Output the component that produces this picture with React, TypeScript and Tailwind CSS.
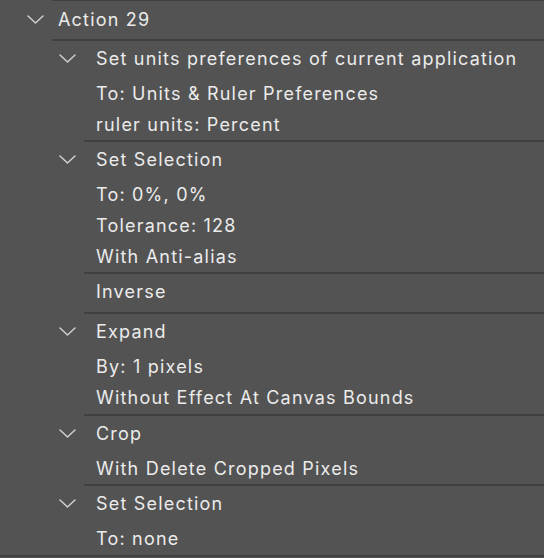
import React from "react";

type Section = { title: string; details: string[]; chevron: boolean; pb?: string };

const sections: Section[] = [
  { title: "Set units preferences of current application", details: ["To: Units & Ruler Preferences", "ruler units: Percent"], chevron: true },
  { title: "Set Selection", details: ["To: 0%, 0%", "Tolerance: 128", "With Anti-alias"], chevron: true },
  { title: "Inverse", details: [], chevron: false },
  { title: "Expand", details: ["By: 1 pixels", "Without Effect At Canvas Bounds"], chevron: true, pb: "pb-[1px]" },
  { title: "Crop", details: ["With Delete Cropped Pixels"], chevron: true },
  { title: "Set Selection", details: ["To: none"], chevron: true, pb: "pb-[1px]" },
];

function Chevron() {
  return (
    <svg width="17" height="9" viewBox="0 0 17 9" fill="none">
      <polyline points="1,1 8.5,8 16,1" stroke="#cfcfcf" strokeWidth="1.5" strokeLinecap="round" strokeLinejoin="round" />
    </svg>
  );
}

export default function App() {
  return (
    <div
      className="w-[544px] h-[558px] overflow-hidden bg-[#535353] text-[#ebebeb] text-[18px] tracking-[1.2px]"
      style={{ fontFamily: "Inter, 'Noto Sans', sans-serif" }}
    >
      <div className="ml-[52px] h-px bg-[#404040]" />
      <div className="flex items-center h-[38px] pb-[1px]">
        <div className="w-[58px] pl-[27px] flex items-center">
          <Chevron />
        </div>
        <span>Action 29</span>
      </div>
      <div className="ml-[52px] h-[2px] bg-[#404040]" />
      {sections.map((s, i) => (
        <React.Fragment key={i}>
          <div className={s.pb}>
            {s.chevron ? (
              <div className="flex items-center h-[36px] pb-[1px]">
                <div className="w-[96px] pl-[59px] flex items-center">
                  <Chevron />
                </div>
                <span className="whitespace-nowrap">{s.title}</span>
              </div>
            ) : (
              <div className="flex items-center h-[38px] pb-[4px] pl-[96px]">
                <span>{s.title}</span>
              </div>
            )}
            {s.details.length > 0 && (
              <div className="pt-[1px]">
                {s.details.map((d, j) => (
                  <div key={j} className="flex items-center h-[31px] pl-[96px] whitespace-nowrap">
                    {d}
                  </div>
                ))}
              </div>
            )}
          </div>
          <div className={i === sections.length - 1 ? "h-[2px] bg-[#404040]" : "ml-[84px] h-[2px] bg-[#404040]"} />
        </React.Fragment>
      ))}
    </div>
  );
}
